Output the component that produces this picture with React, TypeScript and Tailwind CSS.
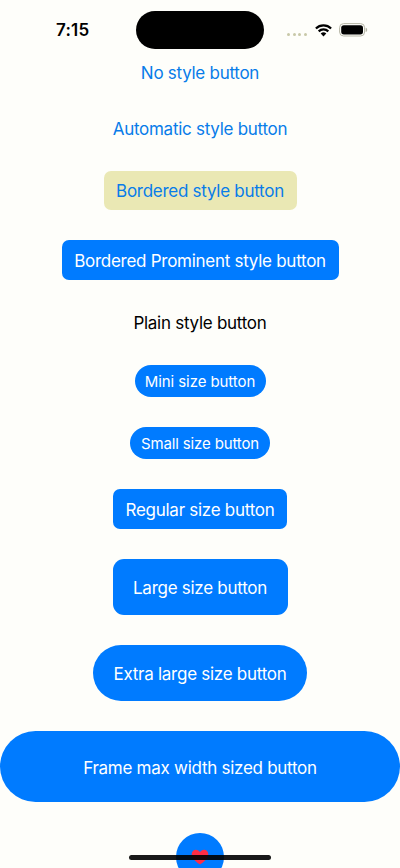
import type { ReactNode } from "react";

const filled = "bg-[#007bff] text-white";

function Button({ className, children }: { className: string; children: ReactNode }) {
  return (
    <button className={`flex shrink-0 items-center justify-center whitespace-nowrap ${className}`}>
      {children}
    </button>
  );
}

function StatusBar() {
  return (
    <header className="flex h-[49px] shrink-0 items-start pt-[11px]">
      <div className="mt-[9px] w-[136px] pl-14 text-[17px] font-semibold leading-5 tracking-[0.2px]">7:15</div>
      <div className="h-[38px] w-32 rounded-full bg-black" />
      <div className="ml-[23px] mt-[11px] flex h-4 items-center">
        <div className="mt-[9px] flex gap-[2.5px]">
          <i className="size-[3px] rounded-full bg-[#c8c8a8]" />
          <i className="size-[3px] rounded-full bg-[#c8c8a8]" />
          <i className="size-[3px] rounded-full bg-[#c8c8a8]" />
          <i className="size-[3px] rounded-full bg-[#c8c8a8]" />
        </div>
        <svg width="17" height="13" viewBox="0 0 17 13" className="ml-[8px]">
          <g fill="none" stroke="#000" strokeWidth="2.2">
            <path d="M.9 4.5a10.8 10.8 0 0 1 15.2 0" />
            <path d="M3.7 7.4a6.8 6.8 0 0 1 9.6 0" />
          </g>
          <path d="M8.5 12.4 5.7 9.6a4 4 0 0 1 5.6 0Z" />
        </svg>
        <svg width="29" height="14" viewBox="0 0 29 14" className="ml-[7px]">
          <rect x=".6" y=".6" width="25" height="12.4" rx="4" fill="none" stroke="#b5b5a5" />
          <rect x="2.2" y="2.2" width="21.8" height="9.2" rx="2.6" />
          <path d="M26.7 4.7c2 .7 2 3.6 0 4.3Z" fill="#b5b5a5" />
        </svg>
      </div>
    </header>
  );
}

export default function App() {
  return (
    <div className="relative flex h-[868px] w-[400px] flex-col overflow-hidden bg-[#fefefa] font-['Inter','Liberation_Sans',sans-serif] text-black">
      <StatusBar />
      <main className="flex flex-col items-center pt-[12px] text-[17px] leading-6 tracking-[-0.27px]">
        <Button className="h-6 text-[#087ce9]">No style button</Button>
        <Button className="mt-8 h-6 text-[#087ce9]">Automatic style button</Button>
        <Button className="mt-[30px] h-[39px] w-[193px] rounded-[7px] bg-[#eae8b4] text-[#087ce9]">
          Bordered style button
        </Button>
        <Button className={`mt-[30px] h-10 w-[277px] rounded-[7px] pt-0.5 ${filled}`}>
          Bordered Prominent style button
        </Button>
        <Button className="mt-[31px] h-6">Plain style button</Button>
        <Button className={`mt-[30px] h-8 w-[131px] rounded-full pt-0.5 text-[15px] tracking-[-0.08px] ${filled}`}>
          Mini size button
        </Button>
        <Button className={`mt-[30px] h-8 w-[140px] rounded-full pt-0.5 text-[15px] tracking-[-0.15px] ${filled}`}>
          Small size button
        </Button>
        <Button className={`mt-[30px] h-10 w-[174px] rounded-[7px] pt-0.5 ${filled}`}>
          Regular size button
        </Button>
        <Button className={`mt-[30px] h-14 w-[175px] rounded-[11px] pt-0.5 ${filled}`}>
          Large size button
        </Button>
        <Button className={`mt-[30px] h-14 w-[214px] rounded-full pt-0.5 ${filled}`}>
          Extra large size button
        </Button>
        <Button className={`mt-[30px] h-[71px] w-[400px] rounded-full pt-0.5 ${filled}`}>
          Frame max width sized button
        </Button>
        <Button className={`mt-[31px] size-12 rounded-full ${filled}`}>
          <svg width="18" height="16" viewBox="0 0 18 16" fill="#ff2d46">
            <path d="M9 15.5C6.5 14 .7 9.7.7 5.2.7 2.5 2.5.7 4.9.7 6.7.7 8.2 1.7 9 3.2 9.8 1.7 11.3.7 13.1.7c2.4 0 4.2 1.8 4.2 4.5 0 4.5-5.8 8.8-8.3 10.3Z" />
          </svg>
        </Button>
      </main>
      <div className="absolute left-[129px] top-[855px] h-[5px] w-[142px] rounded-full bg-black/90" />
    </div>
  );
}
